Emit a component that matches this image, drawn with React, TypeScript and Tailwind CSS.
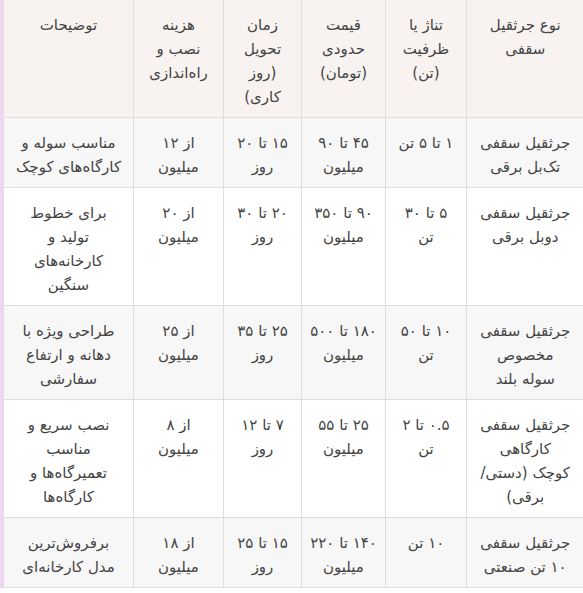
const header: string[][] = [
  ['نوع جرثقیل', 'سقفی'],
  ['تناژ یا', 'ظرفیت', '(تن)'],
  ['قیمت', 'حدودی', '(تومان)'],
  ['زمان', 'تحویل', '(روز', 'کاری)'],
  ['هزینه', 'نصب و', 'راه‌اندازی'],
  ['توضیحات'],
];

const rows: string[][][] = [
  [
    ['جرثقیل سقفی', 'تک‌بل برقی'],
    ['۱ تا ۵ تن'],
    ['۴۵ تا ۹۰', 'میلیون'],
    ['۱۵ تا ۲۰', 'روز'],
    ['از ۱۲', 'میلیون'],
    ['مناسب سوله و', 'کارگاه‌های کوچک'],
  ],
  [
    ['جرثقیل سقفی', 'دوبل برقی'],
    ['۵ تا ۳۰', 'تن'],
    ['۹۰ تا ۳۵۰', 'میلیون'],
    ['۲۰ تا ۳۰', 'روز'],
    ['از ۲۰', 'میلیون'],
    ['برای خطوط', 'تولید و', 'کارخانه‌های', 'سنگین'],
  ],
  [
    ['جرثقیل سقفی', 'مخصوص', 'سوله بلند'],
    ['۱۰ تا ۵۰', 'تن'],
    ['۱۸۰ تا ۵۰۰', 'میلیون'],
    ['۲۵ تا ۳۵', 'روز'],
    ['از ۲۵', 'میلیون'],
    ['طراحی ویژه با', 'دهانه و ارتفاع', 'سفارشی'],
  ],
  [
    ['جرثقیل سقفی', 'کارگاهی', 'کوچک (دستی/', 'برقی)'],
    ['۰.۵ تا ۲', 'تن'],
    ['۲۵ تا ۵۵', 'میلیون'],
    ['۷ تا ۱۲', 'روز'],
    ['از ۸', 'میلیون'],
    ['نصب سریع و', 'مناسب', 'تعمیرگاه‌ها و', 'کارگاه‌ها'],
  ],
  [
    ['جرثقیل سقفی', '۱۰ تن صنعتی'],
    ['۱۰ تن'],
    ['۱۴۰ تا ۲۲۰', 'میلیون'],
    ['۱۵ تا ۲۵', 'روز'],
    ['از ۱۸', 'میلیون'],
    ['برفروش‌ترین', 'مدل کارخانه‌ای'],
  ],
];

function Lines({ lines }: { lines: string[] }) {
  return (
    <>
      {lines.map((l, i) => (
        <span key={i} className="block whitespace-nowrap">
          {l}
        </span>
      ))}
    </>
  );
}

export default function App() {
  return (
    <div className="min-h-[593px] bg-white">
      <div className="border-l-[3px] border-[#efd6f3]">
        <table
          dir="rtl"
          className="w-[580px] table-fixed border-collapse text-[15px] leading-[24px] text-[#444] font-['DejaVu_Sans',sans-serif]"
        >
          <colgroup>
            <col className="w-[117px]" />
            <col className="w-[81px]" />
            <col className="w-[84px]" />
            <col className="w-[78px]" />
            <col className="w-[90px]" />
            <col className="w-[130px]" />
          </colgroup>
          <thead>
            <tr className="bg-[#f8f3f1]">
              {header.map((h, i) => (
                <th
                  key={i}
                  className="border border-[#dedede] border-t-0 first:border-r-0 px-1 pt-[13px] pb-[8px] align-top text-center font-normal"
                >
                  <Lines lines={h} />
                </th>
              ))}
            </tr>
          </thead>
          <tbody>
            {rows.map((r, ri) => (
              <tr key={ri} className={ri % 2 === 0 ? 'bg-[#f7f7f7]' : 'bg-white'}>
                {r.map((c, ci) => (
                  <td
                    key={ci}
                    className="border border-[#dedede] first:border-r-0 px-1 pt-[13px] pb-[8px] align-top text-center"
                  >
                    <Lines lines={c} />
                  </td>
                ))}
              </tr>
            ))}
          </tbody>
        </table>
      </div>
    </div>
  );
}
